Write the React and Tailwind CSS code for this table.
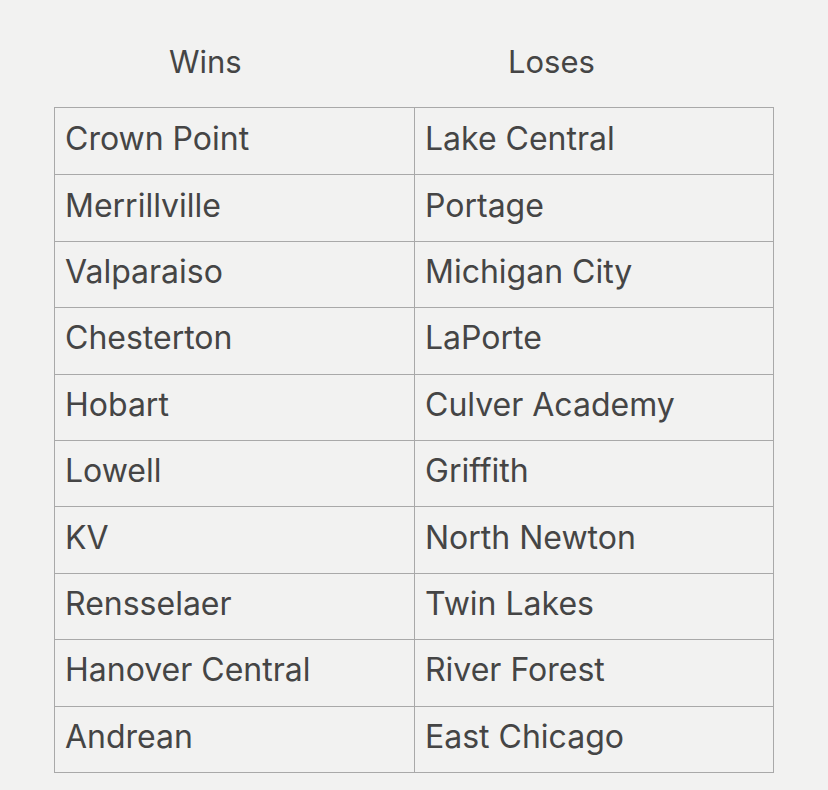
const ROWS = [
  ["Crown Point", "Lake Central"],
  ["Merrillville", "Portage"],
  ["Valparaiso", "Michigan City"],
  ["Chesterton", "LaPorte"],
  ["Hobart", "Culver Academy"],
  ["Lowell", "Griffith"],
  ["KV", "North Newton"],
  ["Rensselaer", "Twin Lakes"],
  ["Hanover Central", "River Forest"],
  ["Andrean", "East Chicago"],
];

export default function App() {
  return (
    <div className="w-[828px] h-[790px] bg-[#f2f2f1] text-[#454545] font-['Inter','Noto_Sans',sans-serif] pl-[54px] pt-[40px]">
      <div className="grid grid-cols-[360px_359px] h-[67px] text-[31px] leading-[44px]">
        <div className="pl-[115px]">Wins</div>
        <div className="pl-[94px]">Loses</div>
      </div>
      <div className="w-[720px] border border-[#a9a9a9]">
        {ROWS.map(([win, lose], i) => (
          <div
            key={win}
            className={`grid grid-cols-[360px_1fr] h-[66.4px] ${i > 0 ? "border-t border-[#a9a9a9]" : ""}`}
          >
            <div className="flex items-center pl-[10px] pb-[5px] text-[32px] border-r border-[#a9a9a9]">{win}</div>
            <div className="flex items-center pl-[10px] pb-[5px] text-[32px]">{lose}</div>
          </div>
        ))}
      </div>
    </div>
  );
}
